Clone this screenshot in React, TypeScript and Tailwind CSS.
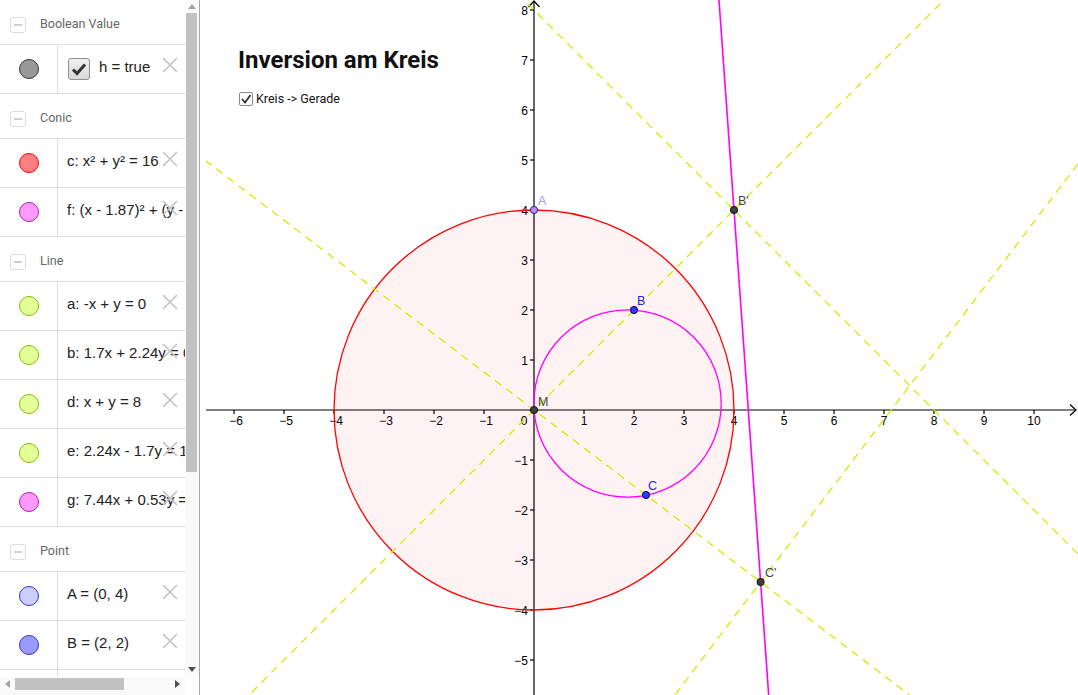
import React from 'react';

// world -> screen (origin at 534,410; 50px per unit)
const X = (x: number) => 534 + 50 * x;
const Y = (y: number) => 410 - 50 * y;

// endpoints of a*x + b*y = c, far outside the view (svg clips)
function linePts(a: number, b: number, c: number) {
  if (Math.abs(b) > Math.abs(a)) {
    return [X(-30), Y((c + 30 * a) / b), X(30), Y((c - 30 * a) / b)];
  }
  return [X((c + 30 * b) / a), Y(-30), X((c - 30 * b) / a), Y(30)];
}

type Row =
  | { kind: 'head'; label: string }
  | { kind: 'item'; text: string; fill: string; ring: string; check?: boolean };

const rows: Row[] = [
  { kind: 'head', label: 'Boolean Value' },
  { kind: 'item', text: 'h = true', fill: '#999999', ring: '#333333', check: true },
  { kind: 'head', label: 'Conic' },
  { kind: 'item', text: 'c: x² + y² = 16', fill: '#ff8080', ring: '#ff0000' },
  { kind: 'item', text: 'f: (x - 1.87)² + (y - 0.13)² = 3.51', fill: '#ff99ff', ring: '#aa22aa' },
  { kind: 'head', label: 'Line' },
  { kind: 'item', text: 'a: -x + y = 0', fill: '#e5ff99', ring: '#88bb00' },
  { kind: 'item', text: 'b: 1.7x + 2.24y = 0', fill: '#e5ff99', ring: '#88bb00' },
  { kind: 'item', text: 'd: x + y = 8', fill: '#e5ff99', ring: '#88bb00' },
  { kind: 'item', text: 'e: 2.24x - 1.7y = 16', fill: '#e5ff99', ring: '#88bb00' },
  { kind: 'item', text: 'g: 7.44x + 0.53y = 31.88', fill: '#ff99ff', ring: '#aa22aa' },
  { kind: 'head', label: 'Point' },
  { kind: 'item', text: 'A = (0, 4)', fill: '#ccccff', ring: '#3333cc' },
  { kind: 'item', text: 'B = (2, 2)', fill: '#9999ff', ring: '#3333cc' },
  { kind: 'item', text: 'C = (2.24, -1.7)', fill: '#9999ff', ring: '#3333cc' },
];

function CloseX() {
  return (
    <svg width="16" height="16" viewBox="0 0 16 16" className="absolute right-[7px] top-[12px]">
      <path d="M1 1 L15 15 M15 1 L1 15" stroke="#c4c4c4" strokeWidth="1.6" />
    </svg>
  );
}

function AlgebraRow({ row }: { row: Row }) {
  if (row.kind === 'head') {
    return (
      <div className="h-[45px] shrink-0 flex items-center pt-[5px] border-b border-[#dddddd]">
        <div className="ml-[10px] w-[16px] h-[16px] rounded-[3px] border border-[#dcdcdc] bg-white flex items-center justify-center">
          <div className="w-[8px] h-[2px] bg-[#cfcfcf]" />
        </div>
        <span className="ml-[14px] text-[12.5px] text-[#666666] font-['Roboto',sans-serif]">{row.label}</span>
      </div>
    );
  }
  return (
    <div className="relative h-[49px] shrink-0 flex border-b border-[#dddddd]">
      <div className="w-[58px] shrink-0 border-r border-[#dddddd] flex items-center justify-center pb-[1px]">
        <div
          className="w-[20px] h-[20px] rounded-full border"
          style={{ background: row.fill, borderColor: row.ring }}
        />
      </div>
      <div className="flex-1 flex items-center pl-[9px] pb-[3px] whitespace-nowrap overflow-hidden text-[15px] text-[#222222] font-['Liberation_Sans',sans-serif]">
        {row.check && (
          <div className="ml-[1px] mr-[9px] mt-[2px] w-[22px] h-[22px] shrink-0 rounded-[3px] border border-[#8f8f8f] bg-gradient-to-b from-[#f0f0f0] to-[#d8d8d8] flex items-center justify-center">
            <svg width="16" height="14" viewBox="0 0 16 14">
              <path d="M2 7.5 L6 11.5 L14 2.5" stroke="#333333" strokeWidth="3" fill="none" />
            </svg>
          </div>
        )}
        <span>{row.text}</span>
      </div>
      <CloseX />
    </div>
  );
}

function AlgebraView() {
  return (
    <div className="w-[200px] h-full shrink-0 flex flex-col border-r border-[#a8a8a8] bg-white">
      <div className="flex flex-1 min-h-0">
        <div className="w-[185px] shrink-0 flex flex-col overflow-hidden">
          {rows.map((r, i) => (
            <AlgebraRow key={i} row={r} />
          ))}
        </div>
        {/* vertical scrollbar */}
        <div className="w-[14px] flex flex-col items-center bg-[#fafafa]">
          <div className="h-[13px] flex items-center justify-center">
            <div className="w-0 h-0 border-x-[4px] border-x-transparent border-b-[5px] border-b-[#a3a3a3]" />
          </div>
          <div className="w-[11px] h-[459px] -ml-[2px] bg-[#c1c1c1]" />
          <div className="flex-1" />
          <div className="h-[16px] flex items-center justify-center">
            <div className="w-0 h-0 border-x-[4px] border-x-transparent border-t-[5px] border-t-[#505050]" />
          </div>
        </div>
      </div>
      {/* horizontal scrollbar */}
      <div className="h-[18px] shrink-0 flex">
        <div className="w-[185px] flex items-start pt-[1px] bg-[#fafafa]">
          <div className="w-[15px] h-[12px] flex items-center justify-center">
            <div className="w-0 h-0 border-y-[4px] border-y-transparent border-r-[5px] border-r-[#a3a3a3]" />
          </div>
          <div className="w-[109px] h-[12px] bg-[#c1c1c1]" />
          <div className="flex-1" />
          <div className="w-[15px] h-[12px] flex items-center justify-center">
            <div className="w-0 h-0 border-y-[4px] border-y-transparent border-l-[5px] border-l-[#505050]" />
          </div>
        </div>
        <div className="flex-1 bg-white" />
      </div>
    </div>
  );
}

function Graphics() {
  const dashed = [
    linePts(-1, 1, 0),
    linePts(1.7, 2.24, 0),
    linePts(1, 1, 8),
    linePts(2.24, -1.7, 16),
  ];
  const g = linePts(7.44, 0.532, 31.888);
  const xs = [-6, -5, -4, -3, -2, -1, 1, 2, 3, 4, 5, 6, 7, 8, 9, 10];
  const ys = [-5, -4, -3, -2, -1, 1, 2, 3, 4, 5, 6, 7, 8];
  const lbl = (n: number) => (n < 0 ? '\u2212' + Math.abs(n) : String(n));
  const font = 'Liberation Sans, Arial, sans-serif';

  const pts = [
    { x: X(0), y: Y(4), fill: '#9c9cff', stroke: '#22227a' },
    { x: X(2), y: Y(2), fill: '#3737ff', stroke: '#000055' },
    { x: X(2.24), y: Y(-1.7), fill: '#3737ff', stroke: '#000055' },
    { x: X(0), y: Y(0), fill: '#404040', stroke: '#111111' },
    { x: X(4), y: Y(4), fill: '#404040', stroke: '#111111' },
    { x: X(4.532), y: Y(-3.44), fill: '#404040', stroke: '#111111' },
  ];
  const labels = [
    { t: 'A', x: 538, y: 205, c: '#9999ff' },
    { t: 'B', x: 637, y: 305, c: '#2222ee' },
    { t: 'C', x: 648, y: 490, c: '#2222ee' },
    { t: 'M', x: 538, y: 406, c: '#444444' },
    { t: "B'", x: 738, y: 205, c: '#444444' },
    { t: "C'", x: 765, y: 577, c: '#444444' },
  ];

  return (
    <div className="relative flex-1 h-full bg-white overflow-hidden">
      <svg width="872" height="695" viewBox="206 0 872 695" className="block">
        <circle cx={X(0)} cy={Y(0)} r={200} fill="#fff2f2" />

        {/* axes */}
        <g stroke="#000" strokeWidth="1.2" fill="none">
          <line x1={206} y1={410} x2={1076} y2={410} />
          <line x1={534} y1={695} x2={534} y2={1} />
          <path d="M1070 404.5 L1076 410 L1070 415.5" />
          <path d="M528.5 7 L534 1 L539.5 7" />
          {xs.map((n) => (
            <line key={'tx' + n} x1={X(n)} y1={410} x2={X(n)} y2={414} />
          ))}
          {ys.map((n) => (
            <line key={'ty' + n} x1={530} y1={Y(n)} x2={534} y2={Y(n)} />
          ))}
        </g>
        <g fontFamily={font} fontSize="12" fill="#000">
          {xs.map((n) => (
            <text key={'lx' + n} x={X(n) + (n < 0 ? 2 : 0)} y={425} textAnchor="middle">
              {lbl(n)}
            </text>
          ))}
          <text x={524} y={425} textAnchor="middle">0</text>
          {ys.map((n) => (
            <text key={'ly' + n} x={528} y={Y(n) + 4.5} textAnchor="end">
              {lbl(n)}
            </text>
          ))}
        </g>

        {/* conics */}
        <circle cx={X(0)} cy={Y(0)} r={200} fill="none" stroke="#ff0000" strokeWidth="1.3" />
        <circle cx={X(1.87)} cy={Y(0.13)} r={93.7} fill="none" stroke="#ff00ff" strokeWidth="1.3" />

        {/* lines */}
        {dashed.map((p, i) => (
          <line
            key={i}
            x1={p[0]}
            y1={p[1]}
            x2={p[2]}
            y2={p[3]}
            stroke="#c8f000"
            strokeWidth="1.3"
            strokeDasharray="8 6"
          />
        ))}
        <line x1={g[0]} y1={g[1]} x2={g[2]} y2={g[3]} stroke="#ff00ff" strokeWidth="1.6" />

        {/* points */}
        {pts.map((p, i) => (
          <circle key={i} cx={p.x} cy={p.y} r={3.6} fill={p.fill} stroke={p.stroke} strokeWidth="1" />
        ))}
        <g fontFamily={font} fontSize="12.5">
          {labels.map((l) => (
            <text key={l.t} x={l.x} y={l.y} fill={l.c}>
              {l.t}
            </text>
          ))}
        </g>
      </svg>

      {/* title + checkbox overlay */}
      <div className="absolute left-[32px] top-[48px] text-[24px] leading-none font-bold text-[#111111] font-['Roboto',sans-serif]">
        Inversion am Kreis
      </div>
      <div className="absolute left-[33px] top-[92px] flex items-center gap-[3px] font-['Roboto',sans-serif]">
        <div className="w-[14px] h-[14px] rounded-[2px] border border-[#8a8a8a] bg-white flex items-center justify-center">
          <svg width="12" height="12" viewBox="0 0 12 12">
            <path d="M2 6 L5 9.5 L10.5 2" stroke="#333333" strokeWidth="1.8" fill="none" />
          </svg>
        </div>
        <span className="text-[12.5px] leading-[14px] text-[#111111]">Kreis -&gt; Gerade</span>
      </div>
    </div>
  );
}

export default function App() {
  return (
    <div className="w-[1078px] h-[695px] flex bg-white overflow-hidden">
      <AlgebraView />
      <div className="w-[6px] h-full shrink-0 bg-white" />
      <Graphics />
    </div>
  );
}
